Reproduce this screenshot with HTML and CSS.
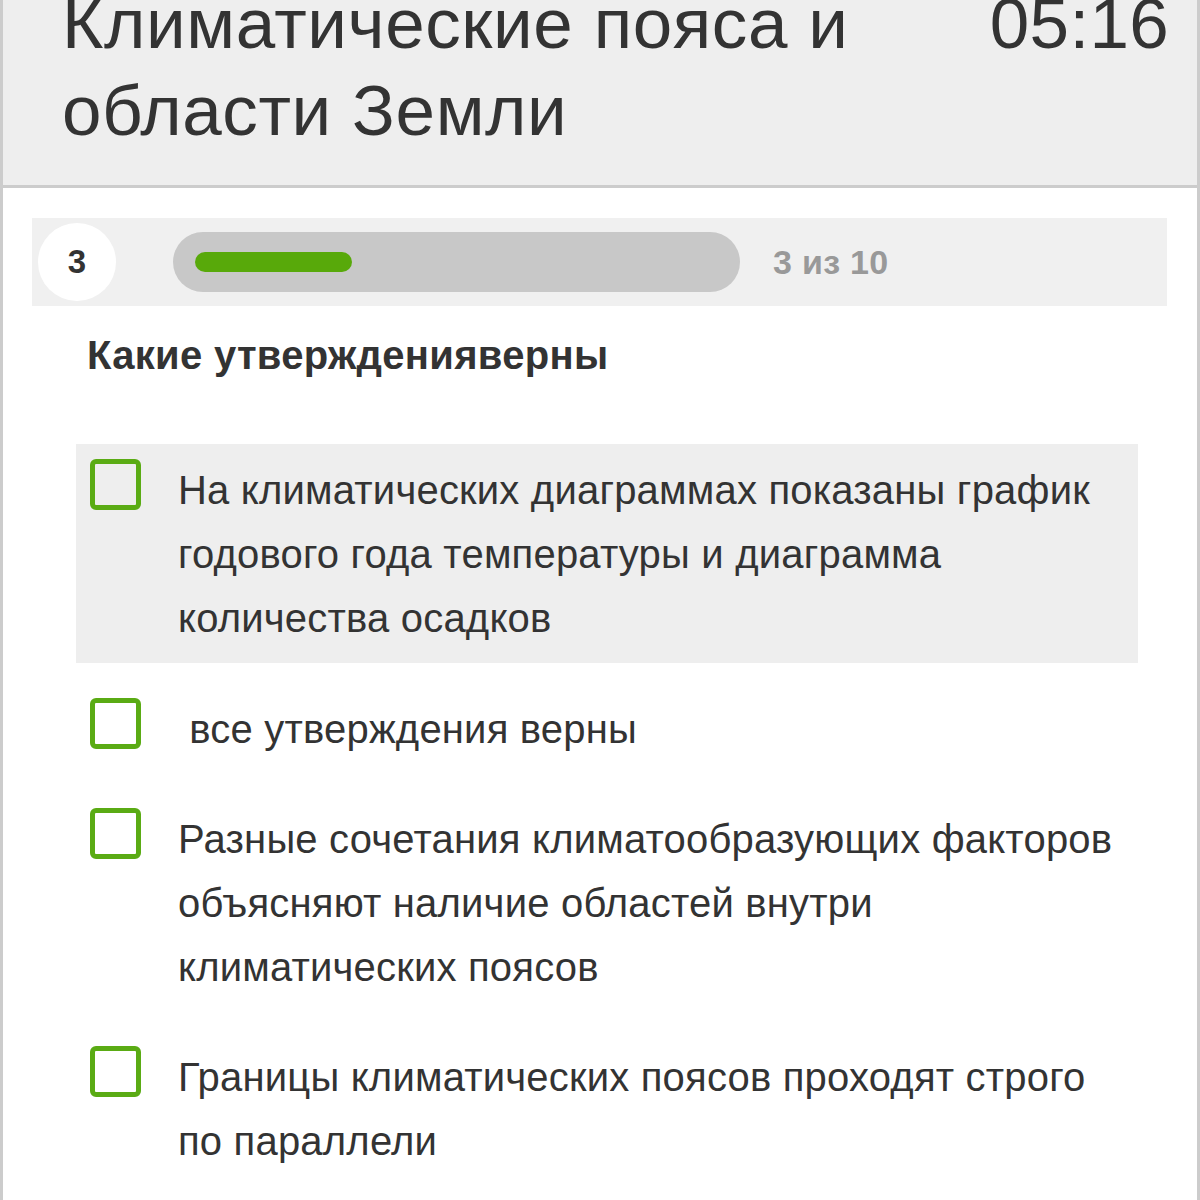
FILE: index.html
```html
<!DOCTYPE html>
<html lang="ru">
<head>
<meta charset="utf-8">
<title>Климатические пояса и области Земли</title>
<link rel="stylesheet" href="styles.css">
</head>
<body>
<div class="page">
  <header class="header">
    <h1 class="title">Климатические пояса и<br>области Земли</h1>
    <div class="timer">05:16</div>
  </header>
  <section class="progress">
    <div class="num">3</div>
    <div class="track"><div class="fill"></div></div>
    <div class="count">3 из 10</div>
  </section>
  <h2 class="question">Какие утвержденияверны</h2>
  <ul class="options">
    <li class="option active"><span class="box"></span><span class="text">На климатических диаграммах показаны график годового года температуры и диаграмма количества осадков</span></li>
    <li class="option"><span class="box"></span><span class="text">&nbsp;все утверждения верны</span></li>
    <li class="option"><span class="box"></span><span class="text">Разные сочетания климатообразующих факторов объясняют наличие областей внутри климатических поясов</span></li>
    <li class="option"><span class="box"></span><span class="text">Границы климатических поясов проходят строго по параллели</span></li>
  </ul>
</div>
</body>
</html>
```
FILE: styles.css
```css
html, body {
  margin: 0;
  padding: 0;
  background: #ffffff;
}
body {
  font-family: "Liberation Sans", Arial, sans-serif;
  color: #333333;
}
.page {
  width: 1200px;
  min-height: 1200px;
  box-sizing: border-box;
  border-left: 3px solid #cccccc;
  border-right: 3px solid #cccccc;
  overflow: hidden;
}
.header {
  background: #eeeeee;
  border-bottom: 3px solid #cccccc;
  height: 188px;
  box-sizing: border-box;
  display: flex;
  justify-content: space-between;
  align-items: flex-start;
  padding: 0 28px 0 59px;
}
.title {
  margin: -20px 0 0 0;
  font-size: 71px;
  font-weight: normal;
  line-height: 87px;
  letter-spacing: 0.6px;
  color: #333333;
}
.timer {
  margin-top: -20px;
  font-size: 71px;
  line-height: 87px;
  letter-spacing: 0.3px;
  color: #333333;
}
.progress {
  margin: 30px 30px 0 29px;
  height: 88px;
  background: #f0f0f0;
  display: flex;
  align-items: center;
  padding-left: 6px;
}
.num {
  width: 78px;
  height: 78px;
  border-radius: 50%;
  background: #ffffff;
  display: flex;
  align-items: center;
  justify-content: center;
  font-size: 33px;
  font-weight: bold;
  color: #333333;
}
.track {
  margin-left: 57px;
  width: 567px;
  height: 60px;
  border-radius: 30px;
  background: #c8c8c8;
  display: flex;
  align-items: center;
  padding-left: 22px;
  box-sizing: border-box;
}
.fill {
  width: 157px;
  height: 20px;
  border-radius: 10px;
  background: #58a90a;
}
.count {
  margin-left: 33px;
  font-size: 34px;
  font-weight: bold;
  letter-spacing: 0.3px;
  color: #999999;
}
.question {
  margin: 25px 0 0 84px;
  font-size: 40px;
  font-weight: bold;
  line-height: 48px;
  letter-spacing: 0.3px;
  color: #333333;
}
.options {
  list-style: none;
  margin: 65px 59px 0 73px;
  padding: 0;
  display: flex;
  flex-direction: column;
  gap: 20px;
}
.option {
  display: flex;
  align-items: flex-start;
  padding: 14px 14px 12px 14px;
}
.option.active {
  background: #eeeeee;
  padding-bottom: 13px;
}
.box {
  flex: none;
  width: 51px;
  height: 51px;
  box-sizing: border-box;
  border: 5px solid #5aab14;
  border-radius: 6px;
  margin-top: 1px;
}
.text {
  margin-left: 37px;
  font-size: 40px;
  line-height: 64px;
  letter-spacing: 0.2px;
  color: #333333;
}
```
